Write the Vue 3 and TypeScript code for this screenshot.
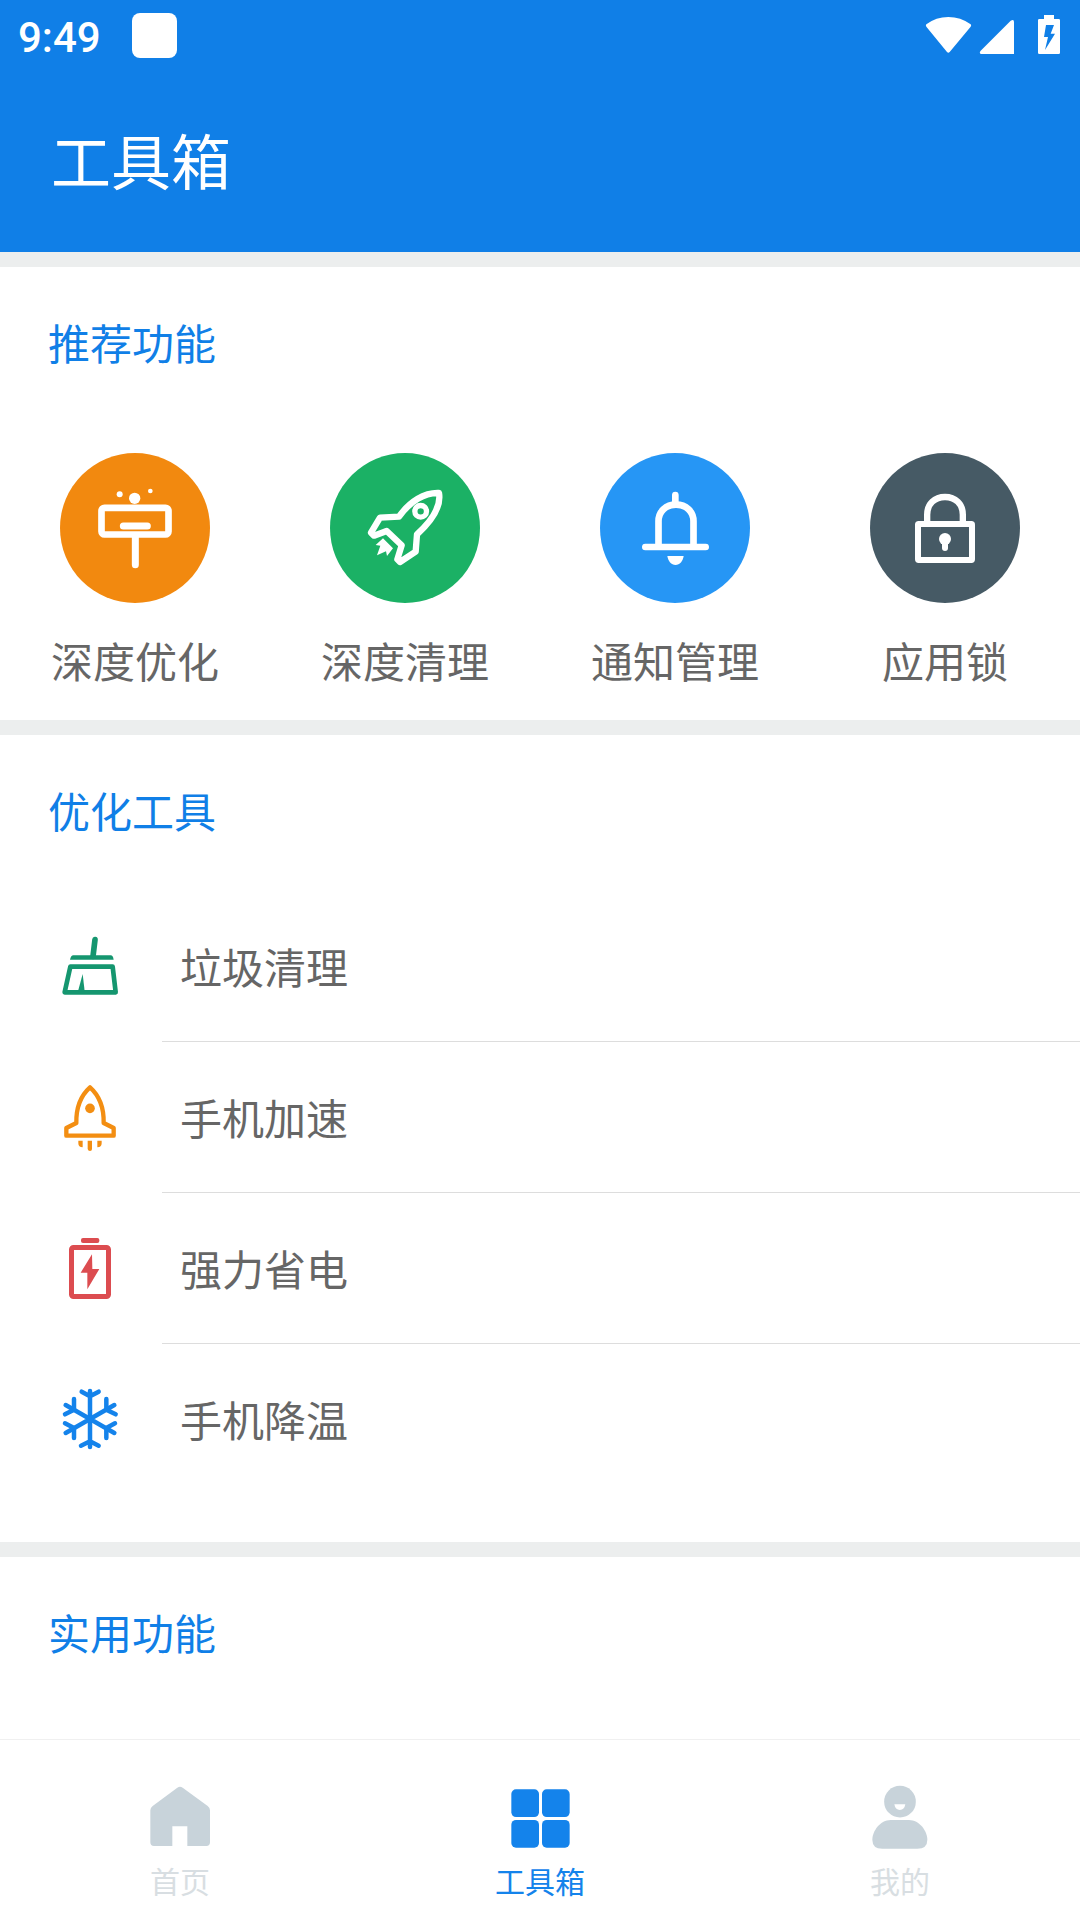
<script setup lang="ts">
interface Feature { id: string; label: string; color: string; origin: string }
interface Tool { id: string; label: string; origin: string }
interface Tab { id: string; label: string; active: boolean }

const features: Feature[] = [
  { id: 'optimize', label: '深度优化', color: '#f2890f', origin: '60 39' },
  { id: 'clean', label: '深度清理', color: '#1bb165', origin: '60 39' },
  { id: 'notify', label: '通知管理', color: '#2696f5', origin: '60 39' },
  { id: 'lock', label: '应用锁', color: '#465a65', origin: '90 39' },
]

const tools: Tool[] = [
  { id: 'junk', label: '垃圾清理', origin: '42 30' },
  { id: 'boost', label: '手机加速', origin: '42 33' },
  { id: 'battery', label: '强力省电', origin: '42 36' },
  { id: 'cool', label: '手机降温', origin: '42 39' },
]

const tabs: Tab[] = [
  { id: 'home', label: '首页', active: false },
  { id: 'tools', label: '工具箱', active: true },
  { id: 'me', label: '我的', active: false },
]
</script>

<template>
  <div class="screen">
    <header class="header">
      <div class="status">
        <span class="time">9:49</span>
        <span class="notice"></span>
        <svg class="signals" width="180" height="80" viewBox="0 0 540 240" fill="#fff">
          <path d="M79 73Q108 51 145 51T212 73Q215 76 212 80L149 156Q145 161 141 156L79 80Q76 76 79 73Z" />
          <path d="M242 152 332 62Q342 56 342 66V162H244Q236 160 242 152Z" />
          <path fill-rule="evenodd" d="M432 45H462V57H476Q480 57 480 61V158Q480 162 476 162H418Q414 162 414 158V61Q414 57 418 57H432ZM438 75 432 111H444L435 150 465 101H452L462 75Z" />
        </svg>
      </div>
      <h1 class="title">工具箱</h1>
    </header>

    <main class="content">
      <section class="card recommend">
        <h2>推荐功能</h2>
        <div class="features">
          <div v-for="f in features" :key="f.id" class="feature">
            <div class="disc" :style="{ background: f.color }">
              <svg width="150" height="150" :viewBox="`${f.origin} 450 450`" fill="none" stroke="#fff">
                <template v-if="f.id === 'optimize'">
                  <rect x="184.500" y="203.500" width="201" height="80" rx="9" stroke-width="20" />
                  <path d="M250 258H322M286 290V374" stroke-width="21" stroke-linecap="round" />
                  <g fill="#fff" stroke="none">
                    <circle cx="284" cy="175" r="17" />
                    <circle cx="239" cy="163" r="9" />
                    <circle cx="331" cy="153" r="7" />
                  </g>
                </template>
                <template v-else-if="f.id === 'clean'">
                  <path d="M387 159C344 157 300 184 267 230L210 233 183 278 192 287 230 273 275 316 262 358 270 366 317 335 321 283C367 241 394 199 387 159Z" stroke-width="19" stroke-linejoin="round" />
                  <circle cx="332" cy="214" r="17.500" stroke-width="16" />
                  <path d="M219 295 249 325 231 348 228 334 201 346 211 317 197 315Z" fill="#fff" stroke="none" />
                </template>
                <template v-else-if="f.id === 'notify'">
                  <path d="M286 165V190M196 321H377" stroke-width="20" stroke-linecap="round" />
                  <path d="M235.500 320V244C235.500 214 258 194 288 194S340.500 214 340.500 244V320" stroke-width="20" />
                  <path d="M262 348H311C309 363 299 375 286.500 375S264 363 262 348Z" fill="#fff" stroke="none" />
                </template>
                <template v-else>
                  <path d="M261.500 250V224C261.500 192 284 171 315 171S368.500 192 368.500 224V250" stroke-width="19" />
                  <rect x="234" y="252" width="162" height="108" rx="2" stroke-width="18" stroke-linejoin="round" />
                  <circle cx="315" cy="297" r="18" fill="#fff" stroke="none" />
                  <path d="M315 300V324" stroke-width="18" stroke-linecap="round" />
                </template>
              </svg>
            </div>
            <span>{{ f.label }}</span>
          </div>
        </div>
      </section>

      <section class="card optimize">
        <h2>优化工具</h2>
        <ul class="tools">
          <li v-for="t in tools" :key="t.id" class="tool">
            <svg width="72" height="72" :viewBox="`${t.origin} 216 216`" fill="none">
              <g v-if="t.id === 'junk'" stroke="#15966f" stroke-linecap="round" stroke-linejoin="round">
                <path d="M165 59 159 109" stroke-width="17" />
                <path d="M100 106H212Q219 106 221 119H90Q93 106 100 106Z" fill="#15966f" stroke="none" />
                <path d="M91 140H218L227 217H74Z" stroke-width="14" />
                <path d="M128 162 134 214H114Z" fill="#15966f" stroke="none" />
              </g>
              <g v-else-if="t.id === 'boost'" stroke="#f38e12">
                <path d="M150 52C122 77 108 109 109 159L79 174V197H221V174L191 159C192 109 178 77 150 52Z" stroke-width="13" stroke-linejoin="round" />
                <circle cx="150" cy="115" r="14.500" fill="#f38e12" stroke="none" />
                <path d="M115 212H128V232Q115 232 115 220ZM172 212H185V220Q185 232 172 232ZM143 212H156V237Q156 243 150 243T143 237Z" fill="#f38e12" stroke="none" />
              </g>
              <g v-else-if="t.id === 'battery'" fill="#dc4c50">
                <rect x="123" y="54" width="55" height="15" rx="6" />
                <rect x="94.500" y="82.500" width="111" height="147" rx="6" fill="none" stroke="#dc4c50" stroke-width="15" />
                <path d="M156 103 122 158H142V208L178 147H157Z" />
              </g>
              <g v-else stroke="#1483eb" stroke-width="13.500" stroke-linecap="round" stroke-linejoin="round">
                <path d="M150 63V231M125 65 150 79 176 65M123 227 150 214 176 227" />
                <path d="M77 105 223 189M77 189 223 105" />
                <path d="M102 87V119L75 133M199 87V119L227 133M102 204V174L75 160M199 204V174L225 160" />
              </g>
            </svg>
            <span>{{ t.label }}</span>
          </li>
        </ul>
      </section>

      <section class="card practical">
        <h2>实用功能</h2>
      </section>
    </main>

    <nav class="tabs">
      <div v-for="t in tabs" :key="t.id" class="tab" :class="{ active: t.active }">
        <svg v-if="t.id === 'home'" width="66" height="66" viewBox="81 162 198 198" fill="#c8d3da">
          <path d="M172 173Q180 168 188 173L263 228Q270 233 270 241V337Q270 348 259 348H202V289H157V348H102Q91 348 91 337V241Q91 233 98 228Z" />
        </svg>
        <svg v-else-if="t.id === 'tools'" width="66" height="66" viewBox="1161 162 198 198" fill="#1483eb">
          <rect x="1174" y="178" width="83" height="83" rx="14" />
          <rect x="1266" y="178" width="83" height="83" rx="14" />
          <rect x="1174" y="270" width="83" height="83" rx="14" />
          <rect x="1266" y="270" width="83" height="83" rx="14" />
        </svg>
        <svg v-else width="66" height="66" viewBox="140 162 198 198" fill="#c8d3da">
          <circle cx="239" cy="215" r="47.500" />
          <path d="M222 223H255Q252 240 238.500 240T222 223Z" fill="#fff" />
          <path d="M211 270H266C297 270 321 303 321 329Q321 356 291 356H186Q156 356 156 329C156 303 180 270 211 270Z" />
        </svg>
        <span>{{ t.label }}</span>
      </div>
    </nav>
  </div>
</template>

<style>
body { margin: 0; }
</style>

<style scoped>
.screen {
  display: flex;
  flex-direction: column;
  width: 1080px;
  height: 1920px;
  overflow: hidden;
  background: #fff;
  font-family: "Noto Sans CJK SC", sans-serif;
}
.header {
  flex: none;
  height: 252px;
  background: #107fe7;
  color: #fff;
}
.status {
  display: flex;
  height: 80px;
}
.time {
  width: 114px;
  padding-left: 18px;
  font: 500 42px/76px Roboto, sans-serif;
}
.notice {
  width: 45px;
  height: 45px;
  margin-top: 13px;
  border-radius: 8px;
  background: #fff;
}
.signals { margin-left: auto; }
.title {
  margin: 0;
  padding: 39px 0 0 51px;
  font-size: 60px;
  font-weight: 400;
  line-height: 80px;
}
.content {
  flex: 1;
  min-height: 0;
  overflow: hidden;
}
.card {
  box-sizing: border-box;
  border-top: 15px solid #eceeee;
}
.recommend { height: 468px; }
.optimize { height: 822px; }
h2 {
  margin: 0;
  padding: 44px 0 2px 48px;
  color: #107fe7;
  font-size: 42px;
  font-weight: 400;
  line-height: 62px;
}
.features {
  display: flex;
  padding-top: 78px;
}
.feature {
  display: flex;
  flex: 1;
  flex-direction: column;
  align-items: center;
  color: #666;
  font-size: 42px;
  line-height: 62px;
}
.feature span { margin-top: 26px; }
.disc {
  width: 150px;
  height: 150px;
  border-radius: 50%;
}
.disc svg { display: block; }
.tools {
  margin: 0;
  padding: 48px 0 0;
  list-style: none;
}
.tool {
  display: flex;
  align-items: center;
  height: 151px;
  padding-left: 54px;
}
.tool svg {
  flex: none;
  margin-bottom: 1px;
}
.tool span {
  flex: 1;
  margin-left: 36px;
  padding-left: 18px;
  border-bottom: 1px solid #ddd;
  color: #666;
  font-size: 42px;
  line-height: 150px;
}
.tool:last-child span { border-color: transparent; }
.tabs {
  display: flex;
  flex: none;
  box-sizing: border-box;
  height: 181px;
  border-top: 1px solid #f0f0f0;
  background: #fff;
}
.tab {
  display: flex;
  flex: 1;
  flex-direction: column;
  align-items: center;
  padding-top: 44px;
  color: #d8dee2;
  font-size: 30px;
  line-height: 44px;
}
.tab span { margin-top: 8px; }
.tab.active { color: #1483eb; }
</style>
